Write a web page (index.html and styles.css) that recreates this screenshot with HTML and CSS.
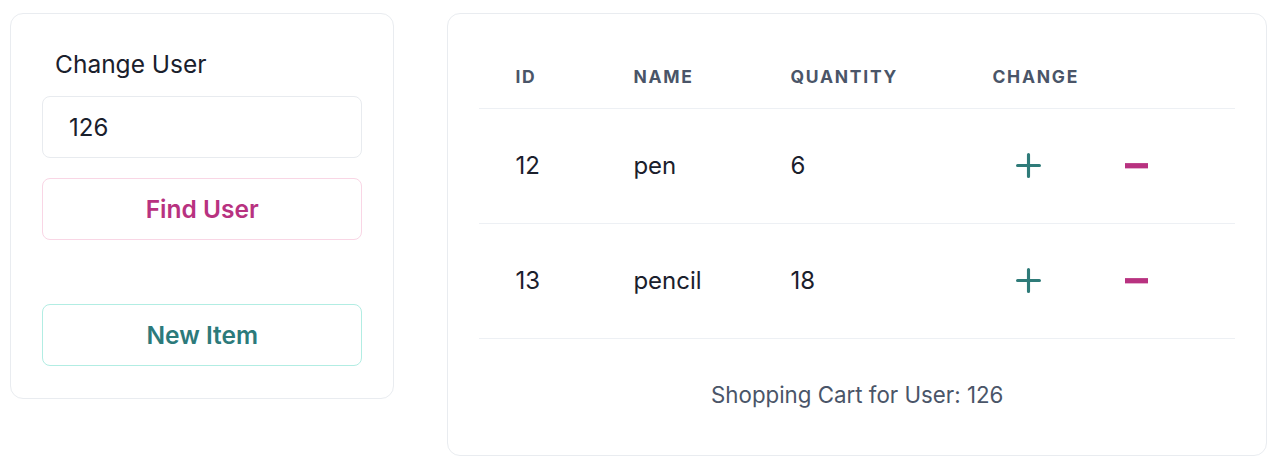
FILE: index.html
```html
<!DOCTYPE html>
<html lang="en">
<head>
<meta charset="utf-8">
<title>Shopping Cart</title>
<link rel="stylesheet" href="styles.css">
</head>
<body>
<main class="page">
  <section class="card side">
    <div class="side-title">Change User</div>
    <input class="user-input" type="text" value="126">
    <button class="btn btn-pink">Find User</button>
    <button class="btn btn-teal new-item">New Item</button>
  </section>

  <section class="card cart">
    <table class="cart-table">
      <colgroup>
        <col class="c-id"><col class="c-name"><col class="c-qty"><col class="c-change">
      </colgroup>
      <thead>
        <tr><th>ID</th><th>Name</th><th>Quantity</th><th>Change</th></tr>
      </thead>
      <tbody>
        <tr>
          <td>12</td><td>pen</td><td>6</td>
          <td>
            <div class="actions">
              <button class="icon-btn plus" aria-label="increase">
                <svg viewBox="0 0 24 24" width="25" height="25"><path fill="currentColor" d="M0,12a1.5,1.5,0,0,0,1.5,1.5h8.75a.25.25,0,0,1,.25.25V22.5a1.5,1.5,0,0,0,3,0V13.75a.25.25,0,0,1,.25-.25H22.5a1.5,1.5,0,0,0,0-3H13.75a.25.25,0,0,1-.25-.25V1.5a1.5,1.5,0,0,0-3,0v8.75a.25.25,0,0,1-.25.25H1.5A1.5,1.5,0,0,0,0,12Z"/></svg>
              </button>
              <button class="icon-btn minus" aria-label="decrease">
                <svg viewBox="0 0 24 24" width="23" height="23"><path fill="currentColor" d="M0 9.5h24v5.5H0z"/></svg>
              </button>
            </div>
          </td>
        </tr>
        <tr>
          <td>13</td><td>pencil</td><td>18</td>
          <td>
            <div class="actions">
              <button class="icon-btn plus" aria-label="increase">
                <svg viewBox="0 0 24 24" width="25" height="25"><path fill="currentColor" d="M0,12a1.5,1.5,0,0,0,1.5,1.5h8.75a.25.25,0,0,1,.25.25V22.5a1.5,1.5,0,0,0,3,0V13.75a.25.25,0,0,1,.25-.25H22.5a1.5,1.5,0,0,0,0-3H13.75a.25.25,0,0,1-.25-.25V1.5a1.5,1.5,0,0,0-3,0v8.75a.25.25,0,0,1-.25.25H1.5A1.5,1.5,0,0,0,0,12Z"/></svg>
              </button>
              <button class="icon-btn minus" aria-label="decrease">
                <svg viewBox="0 0 24 24" width="23" height="23"><path fill="currentColor" d="M0 9.5h24v5.5H0z"/></svg>
              </button>
            </div>
          </td>
        </tr>
      </tbody>
      <caption class="cart-caption">Shopping Cart for User: 126</caption>
    </table>
  </section>
</main>
</body>
</html>
```

FILE: styles.css
```css
* { box-sizing: border-box; }

html, body {
  margin: 0;
  background: #ffffff;
}

body {
  font-family: Inter, "Noto Sans", "Liberation Sans", sans-serif;
  color: #1a202c;
}

.page {
  display: flex;
  align-items: flex-start;
  gap: 53px;
  padding: 13px 13px 0 10px;
}

.card {
  background: #ffffff;
  border: 1px solid #e9ecf0;
  border-radius: 13px;
  padding: 31px;
}

/* left card */
.side {
  width: 385px;
  height: 386px;
  display: flex;
  flex-direction: column;
}

.side-title {
  font-size: 24.5px;
  line-height: 38px;
  padding-left: 13px;
  margin-bottom: 13px;
  color: #1a202c;
}

.user-input {
  height: 62px;
  width: 100%;
  border: 1px solid #e8ebef;
  border-radius: 8px;
  padding: 0 26px;
  font-family: inherit;
  font-size: 24px;
  color: #1a202c;
  background: #fff;
  outline: none;
}

.btn {
  height: 62px;
  width: 100%;
  border-radius: 8px;
  background: #ffffff;
  font-family: inherit;
  font-size: 24.5px;
  font-weight: 600;
  cursor: pointer;
}

.btn-pink {
  margin-top: 20px;
  border: 1px solid #f9d6e5;
  color: #b83280;
}

.btn-teal {
  border: 1px solid #b2ede3;
  color: #2c7a7b;
}

.new-item {
  margin-top: 64px;
}

/* right card */
.cart {
  width: 821px;
  height: 443px;
}

.cart-table {
  width: 100%;
  border-collapse: collapse;
}

.c-id { width: 118px; }
.c-name { width: 157px; }
.c-qty { width: 202px; }

.cart-table th {
  height: 63px;
  padding: 0 36px;
  text-align: left;
  font-size: 17.5px;
  font-weight: 700;
  letter-spacing: 0.1em;
  text-transform: uppercase;
  color: #4a5568;
  border-bottom: 1px solid #edf0f4;
}

.cart-table td {
  height: 115px;
  padding: 0 36px;
  font-size: 24px;
  color: #1a202c;
  border-bottom: 1px solid #edf0f4;
  vertical-align: middle;
}

.actions {
  display: flex;
  gap: 36px;
  align-items: center;
}

.icon-btn {
  width: 72px;
  height: 72px;
  border: none;
  background: transparent;
  padding: 0;
  display: flex;
  align-items: center;
  justify-content: center;
  cursor: pointer;
}

.icon-btn svg { display: block; }

.plus { color: #2f7b79; }
.minus { color: #b83280; }

.cart-caption {
  caption-side: bottom;
  padding-top: 41px;
  font-size: 22.3px;
  line-height: 30px;
  color: #4a5568;
  text-align: center;
}
```
